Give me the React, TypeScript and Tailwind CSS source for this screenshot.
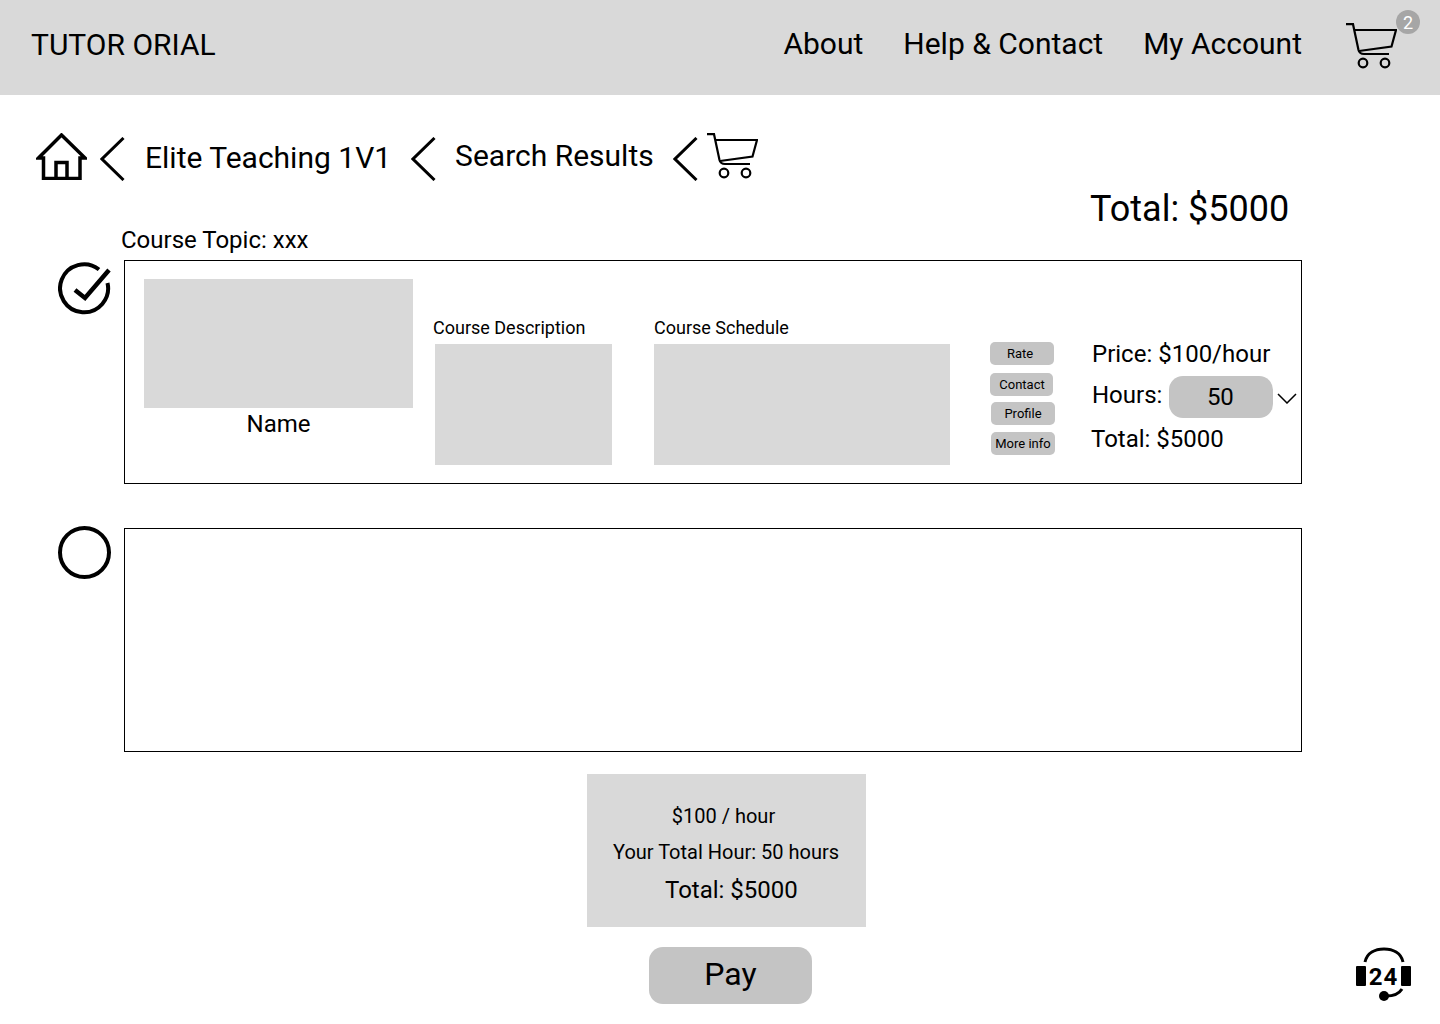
const CartIcon = ({ className }: { className: string }) => (
  <svg viewBox="0 0 51 46" fill="none" stroke="#000" strokeWidth="2.2" className={className}>
    <path d="M0 1.2H7L12.5 27Q13.5 31 18 31H43" />
    <path d="M8.3 7H50L45.500 23.500L13 28" />
    <circle cx="17" cy="40" r="4.3" />
    <circle cx="39" cy="40" r="4.3" />
  </svg>
)

const Chevron = ({ className }: { className: string }) => (
  <svg viewBox="0 0 25 44" fill="none" stroke="#000" strokeWidth="3" className={className}>
    <path d="M23.500 1L2 22L23.500 43" />
  </svg>
)

const HomeIcon = () => (
  <svg viewBox="0 0 51 47" fill="none" stroke="#000" strokeWidth="3.500" className="w-[51px] h-[47px] shrink-0">
    <path d="M25.500 2L2.500 25H7.500V45.500H44V25H49L25.500 2Z" />
    <path d="M20 45.500V29.500H31V45.500" />
  </svg>
)

const SmallButton = ({ label, className }: { label: string; className: string }) => (
  <div className={`h-[23px] rounded-[5px] bg-[#c4c4c4] text-center text-[13px] leading-[23px] text-black ${className}`}>{label}</div>
)

export default function App() {
  return (
    <div className="relative h-[1024px] w-[1440px] overflow-hidden bg-white font-[Roboto,sans-serif] text-black">
      <header className="flex h-[95px] items-center bg-[#d9d9d9] pl-[31px]">
        <div className="mb-[5px] text-[30px] leading-[36px]">TUTOR ORIAL</div>
        <nav className="mb-[8px] ml-auto flex gap-[40px] text-[30px] leading-[36px]">
          <a>About</a>
          <a>Help &amp; Contact</a>
          <a>My Account</a>
        </nav>
        <div className="relative ml-[44px] mr-[43px] mt-[-3px] h-[46px] w-[51px]">
          <CartIcon className="h-[46px] w-[51px]" />
          <div className="absolute left-[50px] top-[-13px] flex h-[24px] w-[24px] items-center justify-center rounded-full bg-[#a6a6a6] text-[18px] text-white">2</div>
        </div>
      </header>

      <div className="mt-[38px] flex h-[48px] pl-[36px]">
        <HomeIcon />
        <Chevron className="ml-[13px] mt-[4px] h-[44px] w-[25px] shrink-0" />
        <div className="ml-[20px] mt-[7px] text-[30px] leading-[36px]">Elite Teaching 1V1</div>
        <Chevron className="ml-[20px] mt-[4px] h-[44px] w-[25px] shrink-0" />
        <div className="ml-[19px] mt-[5px] text-[30px] leading-[36px]">Search Results</div>
        <Chevron className="ml-[19px] mt-[4px] h-[44px] w-[25px] shrink-0" />
        <CartIcon className="ml-[9px] h-[46px] w-[51px] shrink-0" />
      </div>

      <div className="mt-[8px] h-[39px] pl-[1090px] text-[36px] leading-[40px]">Total: $5000</div>
      <div className="h-[24px] pl-[121px] text-[24px] leading-[24px]">Course Topic: xxx</div>

      <div className="mt-[8px] flex pl-[58px]">
        <svg viewBox="0 0 53 53" fill="none" stroke="#000" strokeWidth="4" className="mt-[2px] h-[53px] w-[53px] shrink-0">
          <path d="M49.500 21A24 24 0 1 1 41 7.500" />
          <path d="M17 28L27 36L51 8" strokeWidth="4.500" />
        </svg>
        <div className="ml-[13px] flex h-[224px] w-[1178px] border border-black pl-[19px]">
          <div className="w-[269px] pt-[18px]">
            <div className="h-[129px] bg-[#d9d9d9]" />
            <div className="mt-[2px] text-center text-[24px] leading-[28px]">Name</div>
          </div>
          <div className="ml-[20px] w-[221px] pt-[57px]">
            <div className="h-[20px] text-[18px] leading-[20px]">Course Description</div>
            <div className="ml-[2px] mt-[6px] h-[121px] w-[177px] bg-[#d9d9d9]" />
          </div>
          <div className="w-[296px] pt-[57px]">
            <div className="h-[20px] text-[18px] leading-[20px]">Course Schedule</div>
            <div className="mt-[6px] h-[121px] bg-[#d9d9d9]" />
          </div>
          <div className="ml-[40px] w-[65px] pt-[81px]">
            <SmallButton label="Rate" className="w-[64px] pr-[4px]" />
            <SmallButton label="Contact" className="mt-[8px] w-[63px] pl-[1px]" />
            <SmallButton label="Profile" className="ml-[1px] mt-[6px] w-[64px]" />
            <SmallButton label="More info" className="ml-[1px] mt-[7px] w-[64px]" />
          </div>
          <div className="ml-[35px] pt-[78px] text-[24px]">
            <div className="ml-[2px] h-[30px] leading-[30px]">Price: $100/hour</div>
            <div className="ml-[2px] mt-[7px] flex h-[42px] items-start">
              <span className="leading-[38px]">Hours:</span>
              <div className="ml-[7px] h-[42px] w-[104px] rounded-[14px] bg-[#c4c4c4] pr-[2px] text-center leading-[42px]">50</div>
              <svg viewBox="0 0 20 11" fill="none" stroke="#000" strokeWidth="1.500" className="ml-[4px] mt-[17px] h-[11px] w-[20px]">
                <path d="M1 1L10 10L19 1" />
              </svg>
            </div>
            <div className="ml-[1px] mt-[6px] h-[30px] leading-[30px]">Total: $5000</div>
          </div>
        </div>
      </div>

      <div className="mt-[44px] flex pl-[58px]">
        <svg viewBox="0 0 53 53" fill="none" stroke="#000" strokeWidth="4" className="mt-[-2px] h-[53px] w-[53px] shrink-0">
          <circle cx="26.500" cy="26.500" r="24.500" />
        </svg>
        <div className="ml-[13px] h-[224px] w-[1178px] border border-black" />
      </div>

      <div className="ml-[587px] mt-[22px] h-[153px] w-[279px] bg-[#d9d9d9] pt-[27px]">
        <div className="pr-[6px] text-center text-[20px] leading-[30px]">$100 / hour</div>
        <div className="mt-[6px] pl-[26px] text-[20px] leading-[30px]">Your Total Hour: 50 hours</div>
        <div className="mt-[8px] pl-[78px] text-[24px] leading-[30px]">Total: $5000</div>
      </div>

      <div className="ml-[649px] mt-[20px] h-[57px] w-[163px] rounded-[14px] bg-[#c4c4c4] pb-[3px] text-center text-[32px] leading-[54px]">Pay</div>

      <svg viewBox="0 0 56 56" fill="none" className="absolute left-[1356px] top-[947px] h-[56px] w-[56px]">
        <path d="M9 15C11 6 19 2 28 2S45 6 47 15" stroke="#000" strokeWidth="3" />
        <rect x="0" y="19" width="10" height="20" rx="1" fill="#000" />
        <rect x="45" y="19" width="10" height="20" rx="1" fill="#000" />
        <text x="27.500" y="37.500" textAnchor="middle" fontFamily="Roboto, sans-serif" fontWeight="700" fontSize="24" letterSpacing="1" fill="#000">24</text>
        <circle cx="28" cy="49" r="5" fill="#000" />
        <path d="M30 49C38 49 43 47 46 42" stroke="#000" strokeWidth="3" />
      </svg>
    </div>
  )
}
